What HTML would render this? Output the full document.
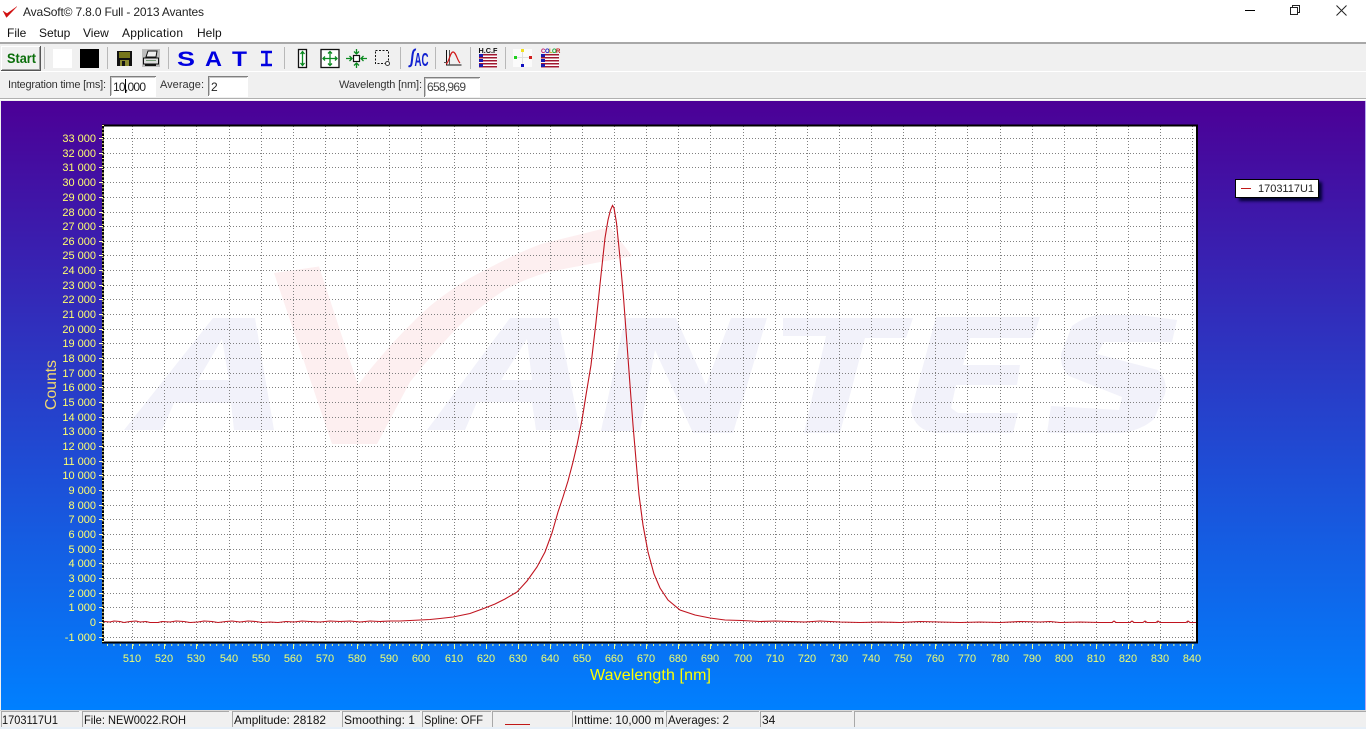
<!DOCTYPE html>
<html><head><meta charset="utf-8"><title>AvaSoft</title>
<style>
html,body{margin:0;padding:0;width:1366px;height:729px;overflow:hidden;background:#f0f0f0}
svg{display:block}
text{font-family:"Liberation Sans",Arial,sans-serif}
</style></head>
<body>
<svg width="1366" height="729" viewBox="0 0 1366 729" xmlns="http://www.w3.org/2000/svg">
<defs>
<linearGradient id="bg" x1="0" y1="0" x2="0" y2="1"><stop offset="0" stop-color="#4c0096"/><stop offset="1" stop-color="#0080ff"/></linearGradient>
<filter id="sh" x="-20%" y="-50%" width="150%" height="220%"><feGaussianBlur stdDeviation="1.5"/></filter>
</defs>
<!-- chrome -->
<rect width="1366" height="43" fill="#fff"/>
<rect y="43" width="1366" height="58" fill="#f0f0f0"/>
<rect y="42" width="1366" height="2" fill="#a8a8a8"/>
<rect y="71" width="1366" height="1" fill="#fff"/>
<rect y="98" width="1366" height="1" fill="#b0b0b0"/>
<rect y="99" width="1366" height="1" fill="#fff"/>
<path d="M3 11L6.500 17.500L17 6.500L7 13.500Z" fill="#d01010" stroke="#d01010" stroke-width=".4"/>
<text x="23" y="16" font-size="12" fill="#222" textLength="181">AvaSoft© 7.8.0 Full - 2013 Avantes</text>
<g font-size="12" fill="#111">
<text x="7" y="37">File</text><text x="39" y="37">Setup</text><text x="83" y="37">View</text><text x="122" y="37" textLength="61">Application</text><text x="197" y="37">Help</text>
</g>
<!-- window buttons -->
<path d="M1245 10.500H1255" stroke="#000" fill="none"/>
<path d="M1290.500 7.500h7v7h-7zM1292.500 7.500v-2h7v7h-2" stroke="#222" fill="none"/>
<path d="M1336.500 5.500l10 10M1346.500 5.500l-10 10" stroke="#222" fill="none"/>
<!-- start button -->
<rect x="1" y="46" width="40" height="25" fill="#f0f0f0"/>
<path d="M1.500 70V46.500H40" stroke="#fff" fill="none"/>
<path d="M1 70.500H40.500V46" stroke="#555" fill="none"/>
<path d="M2 69.500H39.500V47" stroke="#a0a0a0" fill="none"/>
<text x="7" y="63" font-size="13.500" font-weight="bold" fill="#0a6e0a" textLength="29" lengthAdjust="spacingAndGlyphs">Start</text>
<!-- separators -->
<g fill="#b8b8b8"><rect x="44" y="47" width="1" height="22"/><rect x="107" y="47" width="1" height="22"/><rect x="168" y="47" width="1" height="22"/><rect x="284" y="47" width="1" height="22"/><rect x="400" y="47" width="1" height="22"/><rect x="435" y="47" width="1" height="22"/><rect x="470" y="47" width="1" height="22"/><rect x="505" y="47" width="1" height="22"/></g>
<rect x="53" y="49" width="19" height="19" fill="#fff"/>
<rect x="80" y="49" width="19" height="19" fill="#000"/>
<!-- save -->
<rect x="117" y="51" width="15" height="15" fill="#111"/>
<rect x="119" y="52" width="11" height="6" fill="#77771c"/>
<rect x="120" y="60" width="9" height="6" fill="#8a8a30"/><rect x="122" y="61" width="3" height="5" fill="#111"/>
<!-- print -->
<rect x="142" y="49" width="18" height="18" fill="#bdbdbd"/>
<path d="M146 57l2-6h9l-1 6z" fill="#eee" stroke="#111"/>
<path d="M143.500 58h15v6h-15z" fill="#ddd" stroke="#111"/>
<rect x="145" y="64" width="11" height="2" fill="#111"/><rect x="146" y="60" width="10" height="1" fill="#7a9a7a"/>
<!-- SATI -->
<g font-size="21" font-weight="bold" fill="#0000e0">
<text x="177" y="66" textLength="18" lengthAdjust="spacingAndGlyphs">S</text>
<text x="205" y="66" textLength="17" lengthAdjust="spacingAndGlyphs">A</text>
<text x="232" y="66" textLength="15" lengthAdjust="spacingAndGlyphs">T</text>
</g>
<path d="M261 52h11M261 65h11M266.500 52v13" stroke="#0000e0" stroke-width="2.400" fill="none"/>
<!-- zoom icons -->
<rect x="298.500" y="49.500" width="8" height="18" fill="#fff" stroke="#111" stroke-width="1.300"/>
<path d="M302.500 52v13M300.500 54l2-2.500 2 2.500M300.500 63l2 2.500 2-2.500" stroke="#0a8a20" stroke-width="1.300" fill="none"/>
<rect x="321" y="49.500" width="18" height="18" fill="#fff" stroke="#111" stroke-width="1.300"/>
<path d="M323 58.500h14M330 51.500v14M325 56.500l-2 2 2 2M335 56.500l2 2-2 2M328 53.500l2-2 2 2M328 63.500l2 2 2-2" stroke="#0a8a20" stroke-width="1.300" fill="none"/>
<rect x="353.500" y="55.500" width="6" height="6" fill="#fff" stroke="#111" stroke-width="1.200"/>
<path d="M346 58.500h6M361 58.500h6M356.500 49v5M356.500 63v5M349.500 56l2.500 2.500-2.500 2.500M363.500 56l-2.500 2.500 2.500 2.500M354 51.500l2.500 2.500 2.500-2.500M354 65.500l2.500-2.500 2.500 2.500" stroke="#0a8a20" stroke-width="1.300" fill="none"/>
<rect x="375.500" y="50.500" width="13" height="13" fill="none" stroke="#111" stroke-dasharray="2 1.500"/>
<circle cx="387.500" cy="63.500" r="2" fill="#fff" stroke="#333"/>
<!-- integral AC -->
<path d="M408.500 66c3 1 3-2 3.500-6s.5-11 4-10.500" stroke="#1020d0" stroke-width="2" fill="none"/>
<text x="414.500" y="66" font-size="18" font-weight="bold" fill="#1020d0" textLength="14" lengthAdjust="spacingAndGlyphs">AC</text>
<!-- graph icon -->
<path d="M446.500 50v15h15" stroke="#111" fill="none"/>
<path d="M444 62.500h3M449.500 50v15" stroke="#555" fill="none"/>
<path d="M446 64c3-1 4-12 7-12s4 8 7 11" stroke="#d01818" stroke-width="1.200" fill="none"/>
<!-- flags -->
<text x="478.500" y="53" font-size="7" font-weight="bold" fill="#111" textLength="19" lengthAdjust="spacingAndGlyphs">H.C.F</text>
<rect x="479" y="54" width="18" height="14" fill="#fff"/>
<g fill="#a01830"><rect x="479" y="54" width="18" height="1.500"/><rect x="479" y="57" width="18" height="1.500"/><rect x="479" y="60" width="18" height="1.500"/><rect x="479" y="63" width="18" height="1.500"/><rect x="479" y="66" width="18" height="1.500"/></g>
<g fill="#1a1ab0"><rect x="479" y="54" width="4" height="3"/><rect x="479" y="59" width="4" height="3"/><rect x="479" y="64" width="4" height="3"/></g>
<rect x="513" y="49" width="19" height="18" fill="#fbfbfb"/>
<path d="M522.500 50v17M514 57.500h18" stroke="#e0e0e0" fill="none"/>
<rect x="521" y="49" width="3" height="3" fill="#f0e020"/><rect x="514" y="56" width="3" height="3" fill="#20d020"/><rect x="529" y="56" width="3" height="3" fill="#d02020"/><rect x="521" y="64" width="3" height="3" fill="#1010c0"/>
<g font-size="6" font-weight="bold"><text x="541" y="53" fill="#c01060">C</text><text x="545" y="53" fill="#1010c0">O</text><text x="549" y="53" fill="#c0a010">L</text><text x="552" y="53" fill="#10a030">O</text><text x="556" y="53" fill="#c01010">R</text></g>
<rect x="541" y="54" width="18" height="14" fill="#fff"/>
<g fill="#a01830"><rect x="541" y="54" width="18" height="1.500"/><rect x="541" y="57" width="18" height="1.500"/><rect x="541" y="60" width="18" height="1.500"/><rect x="541" y="63" width="18" height="1.500"/><rect x="541" y="66" width="18" height="1.500"/></g>
<g fill="#1a1ab0"><rect x="541" y="54" width="4" height="3"/><rect x="541" y="59" width="4" height="3"/><rect x="541" y="64" width="4" height="3"/></g>
<!-- second row -->
<g font-size="11" fill="#333">
<text x="8" y="88" textLength="98">Integration time [ms]:</text>
<text x="160" y="88" textLength="44">Average:</text>
<text x="339" y="88" textLength="83">Wavelength [nm]:</text>
</g>
<g fill="#fff" stroke="none"><rect x="110" y="76" width="46" height="21"/><rect x="208" y="76" width="40" height="21"/><rect x="424" y="77" width="56" height="20"/></g>
<path d="M110.500 96V76.500H156M208.500 96V76.500H248M424.500 97V77.500H480" stroke="#808080" fill="none"/>
<path d="M111.500 95V77.500H155M209.500 95V77.500H247M425.500 96V78.500H479" stroke="#c8c8c8" fill="none"/>
<g font-size="12" fill="#222"><text x="113" y="91" textLength="33">10,000</text><text x="211" y="91">2</text><text x="427" y="91" fill="#444" textLength="39">658,969</text></g>
<rect x="125" y="79" width="1" height="14" fill="#000"/>
<!-- gradient area -->
<rect x="1" y="101" width="1364" height="609" fill="url(#bg)"/>
<rect x="1365" y="101" width="1" height="609" fill="#b8a8f0"/>
<!-- plot -->
<rect x="103" y="125" width="1094" height="518" fill="#fff"/>
<!-- watermark -->
<g fill="#f2f2fa">
<path fill-rule="evenodd" d="M124 430L213 318H255L274 430H234L231 403H174L162 430ZM222 339L198 380H229Z"/>
<path fill-rule="evenodd" d="M427 430L510 318H558L580 430H536L532 402H477L465 430ZM527 339L501 380H532Z"/>
<path d="M601 431L625 318H676L706 385L731 318H767L733 433H693L655 350L640 431Z"/>
<path d="M783 318H913L906 338H865L840 433H804L826 336H783Z"/>
<path d="M936 317H1040L1033 338H970L963 365H1020L1017 385H956L951 408L958 413H1018L1013 433H935Q915 430 911 411Z"/>
<path d="M1177 320L1172 342H1104L1097 354L1158 370Q1168 380 1165 394L1154 419Q1142 430 1122 433H1047L1051 406L1119 410L1122 397L1069 376Q1060 368 1061 354L1072 326Q1085 316 1101 315H1140Z"/>
</g>
<path d="M274 273L319 266.500L358 385Q392 340 430 306Q458 283 489 268Q515 254 541 244L610 227L632 256L548 272Q525 279 506 289Q485 303 465 320Q435 350 410 382L377 444H332Z" fill="#fdeff0"/>
<!-- grid -->
<path stroke="#808080" stroke-dasharray="1 2" fill="none" d="M104 138.500H1196M104 153.500H1196M104 167.500H1196M104 182.500H1196M104 197.500H1196M104 212.500H1196M104 226.500H1196M104 241.500H1196M104 255.500H1196M104 270.500H1196M104 285.500H1196M104 299.500H1196M104 314.500H1196M104 329.500H1196M104 343.500H1196M104 358.500H1196M104 373.500H1196M104 387.500H1196M104 402.500H1196M104 417.500H1196M104 431.500H1196M104 446.500H1196M104 461.500H1196M104 475.500H1196M104 490.500H1196M104 505.500H1196M104 519.500H1196M104 534.500H1196M104 549.500H1196M104 563.500H1196M104 578.500H1196M104 593.500H1196M104 607.500H1196M104 622.500H1196M104 637.500H1196"/>
<path stroke="#808080" stroke-dasharray="1 2" fill="none" d="M132.500 126V642M164.500 126V642M196.500 126V642M229.500 126V642M261.500 126V642M293.500 126V642M325.500 126V642M357.500 126V642M389.500 126V642M421.500 126V642M454.500 126V642M486.500 126V642M518.500 126V642M550.500 126V642M582.500 126V642M614.500 126V642M646.500 126V642M678.500 126V642M710.500 126V642M743.500 126V642M775.500 126V642M807.500 126V642M839.500 126V642M871.500 126V642M903.500 126V642M935.500 126V642M967.500 126V642M1000.500 126V642M1032.500 126V642M1064.500 126V642M1096.500 126V642M1128.500 126V642M1160.500 126V642M1192.500 126V642"/>
<!-- curve -->
<polyline fill="none" stroke="#c0141f" stroke-width="1.100" points="104,621.500 110,622 114,621 120,621.500 124,622.500 130,621.500 136,621 140,622 146,621.500 150,622.500 158,622.500 162,621.500 170,622 176,621 184,621.500 190,622.500 198,622 204,621 212,621.500 218,622.500 226,621.500 232,621 240,622 248,621 256,621.500 262,622.500 270,622 278,622.500 286,621.500 294,622 302,621 310,621.500 320,622 330,621 340,621.500 350,621 360,622 370,621 380,621.500 390,621 400,621 410,620.500 420,620 430,619.500 440,618.500 453,617 470,613.500 485,608 495,604 505,599 517,592 527,581 537,567 545,552 552,533 558,512 563,497 568,481 573,462 577,445 582,420 586,395 591,365 596,322 601,275 605,238 608,220 610.500,210 612.500,205.500 614,208 616.500,223 620,258 623.400,296 627,344 630,385 633,425 636,460 639,495 643,525 648,552 654,574 660,588 668,600 680,610 695,615 710,618 725,620 742,620.500 760,621.500 775,621 790,621.500 805,622 820,621 840,622 860,622.500 880,622 900,622.500 920,621.500 940,622 960,622.500 980,622 1000,622.500 1020,621.500 1040,622 1050,621.500 1060,622.500 1080,622 1100,622.500 1112,622.500 1114,621 1116,622.500 1130,622.500 1132,621 1134,622.500 1143,622.500 1145,621 1147,622.500 1156,622.500 1158,621 1160,622.500 1186,622.500 1188,621 1190,622.500 1196,622.500"/>
<!-- frame -->
<path d="M103 125.500H1197V642.500H103Z" fill="none" stroke="#000" stroke-width="2"/>
<!-- minor/major ticks -->
<path d="M103 125V643" stroke="#f8f090" stroke-width="2" stroke-dasharray="1 2.660" fill="none"/>
<path d="M99 138.500H103M99 153.500H103M99 167.500H103M99 182.500H103M99 197.500H103M99 212.500H103M99 226.500H103M99 241.500H103M99 255.500H103M99 270.500H103M99 285.500H103M99 299.500H103M99 314.500H103M99 329.500H103M99 343.500H103M99 358.500H103M99 373.500H103M99 387.500H103M99 402.500H103M99 417.500H103M99 431.500H103M99 446.500H103M99 461.500H103M99 475.500H103M99 490.500H103M99 505.500H103M99 519.500H103M99 534.500H103M99 549.500H103M99 563.500H103M99 578.500H103M99 593.500H103M99 607.500H103M99 622.500H103M99 637.500H103" stroke="#fff8c0" fill="none"/>
<path d="M107 645H1197" stroke="#e8ff90" stroke-width="2" stroke-dasharray="1 5.424" fill="none"/>
<path d="M132.500 644v5M164.500 644v5M196.500 644v5M229.500 644v5M261.500 644v5M293.500 644v5M325.500 644v5M357.500 644v5M389.500 644v5M421.500 644v5M454.500 644v5M486.500 644v5M518.500 644v5M550.500 644v5M582.500 644v5M614.500 644v5M646.500 644v5M678.500 644v5M710.500 644v5M743.500 644v5M775.500 644v5M807.500 644v5M839.500 644v5M871.500 644v5M903.500 644v5M935.500 644v5M967.500 644v5M1000.500 644v5M1032.500 644v5M1064.500 644v5M1096.500 644v5M1128.500 644v5M1160.500 644v5M1192.500 644v5" stroke="#e8ff90" fill="none"/>
<!-- y labels -->
<g font-size="11" fill="#ffff70" text-anchor="end">
<text x="96" y="142">33 000</text><text x="96" y="157">32 000</text><text x="96" y="171">31 000</text><text x="96" y="186">30 000</text><text x="96" y="201">29 000</text><text x="96" y="216">28 000</text><text x="96" y="230">27 000</text><text x="96" y="245">26 000</text><text x="96" y="259">25 000</text><text x="96" y="274">24 000</text><text x="96" y="289">23 000</text><text x="96" y="303">22 000</text><text x="96" y="318">21 000</text><text x="96" y="333">20 000</text><text x="96" y="347">19 000</text><text x="96" y="362">18 000</text><text x="96" y="377">17 000</text><text x="96" y="391">16 000</text><text x="96" y="406">15 000</text><text x="96" y="421">14 000</text><text x="96" y="435">13 000</text><text x="96" y="450">12 000</text><text x="96" y="465">11 000</text><text x="96" y="479">10 000</text><text x="96" y="494">9 000</text><text x="96" y="509">8 000</text><text x="96" y="523">7 000</text><text x="96" y="538">6 000</text><text x="96" y="553">5 000</text><text x="96" y="567">4 000</text><text x="96" y="582">3 000</text><text x="96" y="597">2 000</text><text x="96" y="611">1 000</text><text x="96" y="626">0</text><text x="96" y="641">-1 000</text>
</g>
<!-- x labels -->
<g font-size="11" fill="#f0ff70" text-anchor="middle">
<text x="132" y="662">510</text><text x="164" y="662">520</text><text x="196" y="662">530</text><text x="229" y="662">540</text><text x="261" y="662">550</text><text x="293" y="662">560</text><text x="325" y="662">570</text><text x="357" y="662">580</text><text x="389" y="662">590</text><text x="421" y="662">600</text><text x="454" y="662">610</text><text x="486" y="662">620</text><text x="518" y="662">630</text><text x="550" y="662">640</text><text x="582" y="662">650</text><text x="614" y="662">660</text><text x="646" y="662">670</text><text x="678" y="662">680</text><text x="710" y="662">690</text><text x="743" y="662">700</text><text x="775" y="662">710</text><text x="807" y="662">720</text><text x="839" y="662">730</text><text x="871" y="662">740</text><text x="903" y="662">750</text><text x="935" y="662">760</text><text x="967" y="662">770</text><text x="1000" y="662">780</text><text x="1032" y="662">790</text><text x="1064" y="662">800</text><text x="1096" y="662">810</text><text x="1128" y="662">820</text><text x="1160" y="662">830</text><text x="1192" y="662">840</text>
</g>
<text x="590" y="680" font-size="16" fill="#ffff00" textLength="121">Wavelength [nm]</text>
<text transform="translate(56 410) rotate(-90)" font-size="16" fill="#f0d870" textLength="50">Counts</text>
<!-- legend -->
<rect x="1239" y="182" width="83" height="19" fill="#000030" filter="url(#sh)"/>
<rect x="1235.500" y="179.500" width="83" height="18" fill="#fff" stroke="#000"/>
<rect x="1241" y="188" width="10" height="1" fill="#c01818"/>
<text x="1258" y="192" font-size="11" fill="#222" textLength="56">1703117U1</text>
<!-- status bar -->
<rect y="710" width="1366" height="17" fill="#f0f0f0"/>
<rect y="710" width="1366" height="1" fill="#d8d8d8"/>
<rect y="727" width="1366" height="2" fill="#e6eff8"/>
<path d="M1.500 727V711.500H79M82.500 727V711.500H229M232.500 727V711.500H340M342.500 727V711.500H420M422.500 727V711.500H491M492.500 727V711.500H570M572.500 727V711.500H665M666.500 727V711.500H759M760.500 727V711.500H852M854.500 727V711.500H1366" stroke="#a8a8a8" fill="none"/>
<g font-size="12" fill="#111">
<text x="2" y="724" textLength="56" lengthAdjust="spacingAndGlyphs">1703117U1</text>
<text x="84" y="724" textLength="102" lengthAdjust="spacingAndGlyphs">File: NEW0022.ROH</text>
<text x="234" y="724" textLength="92" lengthAdjust="spacingAndGlyphs">Amplitude: 28182</text>
<text x="344" y="724" textLength="71" lengthAdjust="spacingAndGlyphs">Smoothing: 1</text>
<text x="424" y="724" textLength="59" lengthAdjust="spacingAndGlyphs">Spline: OFF</text>
<text x="574" y="724" textLength="90" lengthAdjust="spacingAndGlyphs">Inttime: 10,000 m</text>
<text x="668" y="724" textLength="61" lengthAdjust="spacingAndGlyphs">Averages: 2</text>
<text x="762" y="724">34</text>
</g>
<rect x="664" y="711" width="2" height="16" fill="#f0f0f0"/>
<rect x="666" y="712" width="1" height="14" fill="#a8a8a8"/>
<rect x="505" y="724" width="25" height="1" fill="#c01818"/>
</svg>
</body></html>
